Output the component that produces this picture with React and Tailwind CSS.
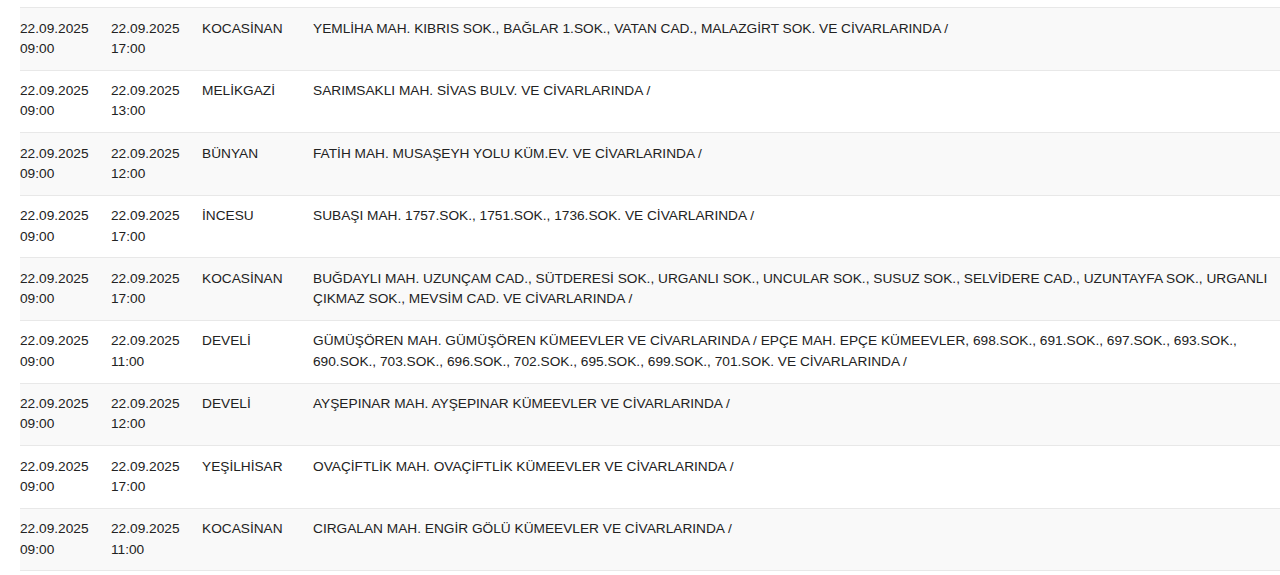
import React from 'react';

const rows = [
    { start: '22.09.2025', startTime: '09:00', end: '22.09.2025', endTime: '17:00', district: 'KOCASİNAN', address: 'YEMLİHA MAH. KIBRIS SOK., BAĞLAR 1.SOK., VATAN CAD., MALAZGİRT SOK. VE CİVARLARINDA /' },
    { start: '22.09.2025', startTime: '09:00', end: '22.09.2025', endTime: '13:00', district: 'MELİKGAZİ', address: 'SARIMSAKLI MAH. SİVAS BULV. VE CİVARLARINDA /' },
    { start: '22.09.2025', startTime: '09:00', end: '22.09.2025', endTime: '12:00', district: 'BÜNYAN', address: 'FATİH MAH. MUSAŞEYH YOLU KÜM.EV. VE CİVARLARINDA /' },
    { start: '22.09.2025', startTime: '09:00', end: '22.09.2025', endTime: '17:00', district: 'İNCESU', address: 'SUBAŞI MAH. 1757.SOK., 1751.SOK., 1736.SOK. VE CİVARLARINDA /' },
    { start: '22.09.2025', startTime: '09:00', end: '22.09.2025', endTime: '17:00', district: 'KOCASİNAN', address: 'BUĞDAYLI MAH. UZUNÇAM CAD., SÜTDERESİ SOK., URGANLI SOK., UNCULAR SOK., SUSUZ SOK., SELVİDERE CAD., UZUNTAYFA SOK., URGANLI ÇIKMAZ SOK., MEVSİM CAD. VE CİVARLARINDA /' },
    { start: '22.09.2025', startTime: '09:00', end: '22.09.2025', endTime: '11:00', district: 'DEVELİ', address: 'GÜMÜŞÖREN MAH. GÜMÜŞÖREN KÜMEEVLER VE CİVARLARINDA / EPÇE MAH. EPÇE KÜMEEVLER, 698.SOK., 691.SOK., 697.SOK., 693.SOK., 690.SOK., 703.SOK., 696.SOK., 702.SOK., 695.SOK., 699.SOK., 701.SOK. VE CİVARLARINDA /' },
    { start: '22.09.2025', startTime: '09:00', end: '22.09.2025', endTime: '12:00', district: 'DEVELİ', address: 'AYŞEPINAR MAH. AYŞEPINAR KÜMEEVLER VE CİVARLARINDA /' },
    { start: '22.09.2025', startTime: '09:00', end: '22.09.2025', endTime: '17:00', district: 'YEŞİLHİSAR', address: 'OVAÇİFTLİK MAH. OVAÇİFTLİK KÜMEEVLER VE CİVARLARINDA /' },
    { start: '22.09.2025', startTime: '09:00', end: '22.09.2025', endTime: '11:00', district: 'KOCASİNAN', address: 'CIRGALAN MAH. ENGİR GÖLÜ KÜMEEVLER VE CİVARLARINDA /' },
];

const App = () => {
    return (
        <div className="min-h-screen bg-white pt-[7px] pl-[20px] font-['Liberation_Sans',Arial,sans-serif] text-[13.7px] leading-[20.3px] text-[#222]">
            <div className="border-t border-[#e8e8e8]">
                {rows.map((row, i) => (
                    <div
                        key={i}
                        className={`grid grid-cols-[91px_91px_111px_1fr] border-b border-[#e8e8e8] py-[10.5px] ${i % 2 === 0 ? 'bg-[#f9f9f9]' : 'bg-white'}`}
                    >
                        {/* Start */}
                        <div>
                            <div>{row.start}</div>
                            <div>{row.startTime}</div>
                        </div>

                        {/* End */}
                        <div>
                            <div>{row.end}</div>
                            <div>{row.endTime}</div>
                        </div>

                        {/* District */}
                        <div>{row.district}</div>

                        {/* Address */}
                        <div>{row.address}</div>
                    </div>
                ))}
            </div>
        </div>
    );
};

export default App;
